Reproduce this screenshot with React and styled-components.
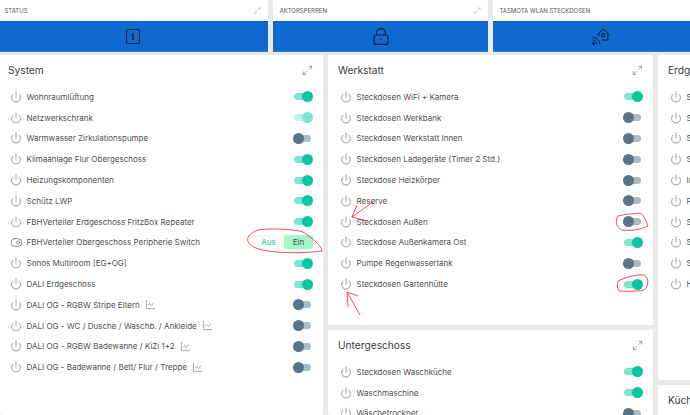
import React from 'react';
import styled, { createGlobalStyle } from 'styled-components';
import { Maximize2, Power, ToggleRight, LineChart } from 'lucide-react';

const GlobalStyle = createGlobalStyle`
  html, body { margin: 0; padding: 0; background: #e9e9e9; }
  body { font-family: "Inter", "Noto Sans", sans-serif; overflow: hidden; }
`;

const Page = styled.div`
  position: relative;
  width: 690px;
  height: 415px;
  overflow: hidden;
`;

const TopRow = styled.div`
  display: grid;
  grid-template-columns: 270px 215px 215px;
  gap: 5px;
  height: 52px;
  margin-left: -2px;
`;

const TopCard = styled.div`
  display: flex;
  flex-direction: column;
  background: #fff;
`;

const TopHeader = styled.div`
  display: flex;
  align-items: center;
  justify-content: space-between;
  height: 21px;
  padding: 0 7px 0 6.5px;
  font-size: 6px;
  color: #555;
  text-transform: uppercase;
`;

const BlueBar = styled.div`
  flex: 1;
  display: flex;
  align-items: center;
  justify-content: center;
  background: #0f69cf;
  border-top: 1px solid #0b5cb8;
  border-bottom: 1px solid #2a7bd6;
  color: #08203f;
`;

const InfoBox = styled.div`
  width: 12px;
  height: 13px;
  border: 1.2px solid #08203f;
  border-radius: 2px;
  display: flex;
  align-items: center;
  justify-content: center;
  font: bold 9px "DejaVu Serif", serif;
`;

const Columns = styled.div`
  display: grid;
  grid-template-columns: 323px 325px 325px;
  gap: 5px;
  margin-top: 3px;
`;

const Stack = styled.div`
  display: flex;
  flex-direction: column;
  gap: 5px;
`;

const Card = styled.section`
  background: #fff;
  border-radius: 2px;
  height: ${p => p.$height}px;
  padding: 0 8px 0 ${p => p.$pad}px;
  box-sizing: border-box;
  overflow: hidden;
`;

const CardHead = styled.div`
  display: flex;
  align-items: center;
  justify-content: space-between;
  height: 30.5px;
  margin-bottom: 1px;
  padding-right: 2px;
  font-size: 10.2px;
  color: #3a3a3a;
`;

const Row = styled.div`
  display: flex;
  align-items: center;
  height: 20.8px;
  padding-left: 2px;
  font-size: 8px;
  color: #4f4f4f;
`;

const RowIcon = styled.span`
  display: flex;
  width: 16.5px;
  color: #666;
`;

const Label = styled.span`
  flex: 1;
  display: flex;
  align-items: center;
  gap: 5px;
  white-space: nowrap;
`;

const Toggle = styled.span`
  position: relative;
  width: 17px;
  height: 7px;
  border-radius: 4px;
  margin-right: 4px;
  background: ${p => (p.$on ? '#7fe3cd' : '#aabbc5')};
  opacity: ${p => (p.$dim ? 0.5 : 1)};

  &::after {
    content: '';
    position: absolute;
    top: -2px;
    left: ${p => (p.$on ? '8px' : '-1px')};
    width: 11px;
    height: 11px;
    border-radius: 50%;
    background: ${p => (p.$on ? '#06c7a0' : '#587488')};
  }
`;

const Segment = styled.span`
  display: flex;
  height: 14px;
  margin-right: 2px;
  font-size: 8px;
  line-height: 14px;
  text-align: center;
`;

const SegmentPart = styled.span`
  width: ${p => (p.$active ? 29 : 31)}px;
  color: ${p => (p.$active ? '#3c5a4c' : '#12c9a5')};
  background: ${p => (p.$active ? '#a6f7c8' : '#fafafa')};
  border-radius: 2px;
`;

const Ink = styled.svg`
  position: absolute;
  left: 0;
  top: 0;
  pointer-events: none;
`;

const system = [
  ['Wohnraumlüftung', 1], ['Netzwerkschrank', 2], ['Warmwasser Zirkulationspumpe', 0],
  ['Klimaanlage Flur Obergeschoss', 1], ['Heizungskomponenten', 1], ['Schütz LWP', 1],
  ['FBHVerteiler Erdgeschoss FritzBox Repeater', 1], ['FBHVerteiler Obergeschoss Peripherie Switch', 'seg'],
  ['Sonos Multiroom [EG+OG]', 1], ['DALI Erdgeschoss', 1],
  ['DALI OG - RGBW Stripe Eltern', 0, true], ['DALI OG - WC / Dusche / Waschb. / Ankleide', 0, true],
  ['DALI OG - RGBW Badewanne / KiZi 1+2', 0, true], ['DALI OG - Badewanne / Bett/ Flur / Treppe', 0, true],
];

const werkstatt = [
  ['Steckdosen WiFi + Kamera', 1], ['Steckdosen Werkbank', 0], ['Steckdosen Werkstatt Innen', 0],
  ['Steckdosen Ladegeräte (Timer 2 Std.)', 0], ['Steckdose Heizkörper', 0], ['Reserve', 0],
  ['Steckdosen Außen', 0], ['Steckdose Außenkamera Ost', 1], ['Pumpe Regenwassertank', 0],
  ['Steckdosen Gartenhütte', 1],
];

const unter = [['Steckdosen Waschküche', 1], ['Waschmaschine', 1], ['Wäschetrockner', 0]];
const erdg = ['S', 'S', 'S', 'S', 'In', 'F', 'S', 'S', 'S', 'H'];

const DeviceRow = ({ name, state, chart }) => (
  <Row>
    <RowIcon>
      {state === 'seg' ? <ToggleRight size={13} strokeWidth={1.3} /> : <Power size={12} strokeWidth={1.3} />}
    </RowIcon>
    <Label>
      {name}
      {chart && <LineChart size={11} strokeWidth={1.1} />}
    </Label>
    {state === 'seg' ? (
      <Segment>
        <SegmentPart>Aus</SegmentPart>
        <SegmentPart $active>Ein</SegmentPart>
      </Segment>
    ) : (
      <Toggle $on={state > 0} $dim={state === 2} />
    )}
  </Row>
);

const Head = ({ title }) => (
  <CardHead>
    {title}
    <Maximize2 size={11} strokeWidth={1.1} color="#555" />
  </CardHead>
);

const App = () => (
  <Page>
    <GlobalStyle />
    <TopRow>
      <TopCard>
        <TopHeader>Status<Maximize2 size={7} strokeWidth={1} color="#777" /></TopHeader>
        <BlueBar><InfoBox>i</InfoBox></BlueBar>
      </TopCard>
      <TopCard>
        <TopHeader>Aktorsperren<Maximize2 size={7} strokeWidth={1} color="#777" /></TopHeader>
        <BlueBar>
          <svg width="16" height="17" viewBox="0 0 16 17" fill="none" stroke="currentColor" strokeWidth="1.1">
            <rect x="1" y="7" width="14" height="9.4" rx="2" />
            <path d="M3.6 7 V4.6 A4.4 4 0 0 1 12.4 4.6 V7" />
            <path d="M8 10.5 V12.5" />
          </svg>
        </BlueBar>
      </TopCard>
      <TopCard>
        <TopHeader>Tasmota WLAN Steckdosen</TopHeader>
        <BlueBar>
          <svg width="18" height="17" viewBox="0 0 18 17" fill="none" stroke="currentColor" strokeWidth="1">
            <path d="M5 7 L11 1 L17.6 7 M7 5.5 V8.5 M15.8 5.5 V12 L10 12" />
            <rect x="9.8" y="5.8" width="2.8" height="2.8" />
            <path d="M0.6 9.2 A7.2 7.2 0 0 1 7.8 16.4 M0.6 12 A4.4 4.4 0 0 1 5 16.4" />
            <circle cx="1.6" cy="15.4" r="1" fill="currentColor" />
          </svg>
        </BlueBar>
      </TopCard>
    </TopRow>
    <Columns>
      <Card $height={360} $pad={8}>
        <Head title="System" />
        {system.map(([n, s, c]) => <DeviceRow key={n} name={n} state={s} chart={c} />)}
      </Card>
      <Stack>
        <Card $height={270} $pad={10}>
          <Head title="Werkstatt" />
          {werkstatt.map(([n, s]) => <DeviceRow key={n} name={n} state={s} />)}
        </Card>
        <Card $height={85} $pad={10}>
          <Head title="Untergeschoss" />
          {unter.map(([n, s]) => <DeviceRow key={n} name={n} state={s} />)}
        </Card>
      </Stack>
      <Stack>
        <Card $height={325} $pad={10}>
          <Head title="Erdgeschoss" />
          {erdg.map((n, i) => <DeviceRow key={i} name={n} state={1} />)}
        </Card>
        <Card $height={40} $pad={10}>
          <Head title="Küche" />
        </Card>
      </Stack>
    </Columns>
    <Ink width="690" height="415" viewBox="0 0 690 415" fill="none" stroke="#f0222c" strokeWidth="0.8">
      <path d="M258 230 C270 228 295 229 303 232 C312 238 322 246 322 251 C300 254 268 253 256 248 C246 244 243 236 258 230" />
      <path d="M618 216 C625 214 632 214 640 213 C644 215 646 221 648 226 C640 230 630 231 622 230 C616 228 615 220 618 216" />
      <path d="M618 281 C626 277 638 274 644 275 C650 278 648 288 644 290 C634 292 624 291 619 291 C617 288 617 284 618 281" />
      <path d="M373 202 L352 217 M352 217 L357 205 M352 217 L367 221" />
      <path d="M347 292 L360 315 M347 292 L358 296 M347 292 L348 307" />
    </Ink>
  </Page>
);

export default App;
